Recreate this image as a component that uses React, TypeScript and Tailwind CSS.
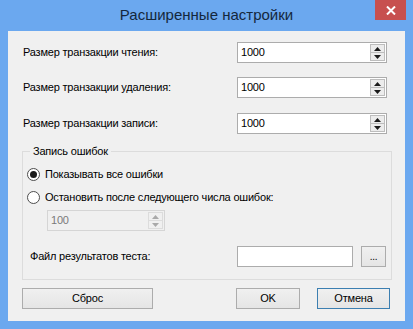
import type { ReactNode } from "react";

const FONT = { fontFamily: '"Liberation Sans", Arial, sans-serif' };

function Arrow({ up, disabled }: { up?: boolean; disabled?: boolean }) {
  return (
    <svg width="7" height="4" viewBox="0 0 7 4" className="block">
      <path
        d={up ? "M0 4 L3.5 0 L7 4 Z" : "M0 0 L7 0 L3.5 4 Z"}
        fill={disabled ? "#a9a9a9" : "#1a1a1a"}
      />
    </svg>
  );
}

function SpinBox({
  value,
  disabled,
  className = "",
}: {
  value: string;
  disabled?: boolean;
  className?: string;
}) {
  return (
    <div
      className={`flex h-[21px] items-center border pr-[1px] ${
        disabled
          ? "border-[#d5d5d5] bg-[#f0f0f0] text-[#7a7a7a]"
          : "border-[#acacac] bg-white text-black"
      } ${className}`}
    >
      <span className="flex-1 pl-[3px] leading-none">{value}</span>
      <div className="flex h-[17px] w-[15px] flex-col">
        <div
          className={`flex flex-1 items-center justify-center border ${
            disabled ? "border-[#dcdcdc] bg-[#f0f0f0]" : "border-[#bdbdbd] bg-[#ececec]"
          }`}
        >
          <Arrow up disabled={disabled} />
        </div>
        <div
          className={`-mt-px flex flex-1 items-center justify-center border ${
            disabled ? "border-[#dcdcdc] bg-[#f0f0f0]" : "border-[#bdbdbd] bg-[#ececec]"
          }`}
        >
          <Arrow disabled={disabled} />
        </div>
      </div>
    </div>
  );
}

function Button({
  children,
  className = "",
  isDefault,
}: {
  children: ReactNode;
  className?: string;
  isDefault?: boolean;
}) {
  return (
    <button
      className={`flex h-[21px] items-center justify-center border bg-gradient-to-b from-[#f0f0f0] to-[#e5e5e5] text-black ${
        isDefault ? "border-[#3c7fb1]" : "border-[#acacac]"
      } ${className}`}
    >
      {children}
    </button>
  );
}

function Radio({ checked, label }: { checked?: boolean; label: string }) {
  return (
    <div className="flex h-[16px] items-center">
      <span className="flex h-[13px] w-[13px] items-center justify-center rounded-full border border-[#4d4d4d] bg-white">
        {checked && <span className="h-[7px] w-[7px] rounded-full bg-[#1a1a1a]" />}
      </span>
      <span className="ml-[5px]">{label}</span>
    </div>
  );
}

const rows = [
  { label: "Размер транзакции чтения:", mt: "mt-[11px]" },
  { label: "Размер транзакции удаления:", mt: "mt-[14px]" },
  { label: "Размер транзакции записи:", mt: "mt-[15px]" },
];

export default function App() {
  return (
    <div
      className="flex h-[329px] w-[413px] flex-col bg-[#6ba8ef] text-[11px] tracking-[-0.2px] text-black"
      style={FONT}
    >
      <div className="relative flex h-[31px] shrink-0 items-center justify-center tracking-normal">
        <span className="text-[15px] text-[#14273c]">Расширенные настройки</span>
        <div className="absolute right-[7px] top-0 flex h-[20px] w-[31px] items-center justify-center bg-[#c7504f]">
          <svg width="10" height="9" viewBox="0 0 10 9">
            <path d="M1 0.5 L9 8.5 M9 0.5 L1 8.5" stroke="#fff" strokeWidth="2" />
          </svg>
        </div>
      </div>

      <div className="mx-[8px] mb-[8px] flex flex-1 flex-col bg-[#f0f0f0] px-[14px]">
        {rows.map((r) => (
          <div key={r.label} className={`flex items-center justify-between ${r.mt}`}>
            <span className="pl-px">{r.label}</span>
            <SpinBox value="1000" className="mr-[4px] w-[150px]" />
          </div>
        ))}

        <fieldset className="mt-[10px] h-[136px] w-[370px] border border-[#dcdcdc] px-[4px]">
          <legend className="ml-[3px] px-[3px] leading-[14px]">Запись ошибок</legend>
          <div className="mt-[8px] pl-0">
            <Radio checked label="Показывать все ошибки" />
            <div className="mt-[7px]">
              <Radio label="Остановить после следующего числа ошибок:" />
            </div>
            <SpinBox value="100" disabled className="ml-[20px] mt-[5px] w-[118px]" />
            <div className="mt-[15px] flex items-center pr-[1px]">
              <span className="ml-[3px] flex-1">Файл результатов теста:</span>
              <div className="h-[21px] w-[116px] border border-[#acacac] bg-white" />
              <Button className="ml-[8px] w-[25px] text-[10px]">...</Button>
            </div>
          </div>
        </fieldset>

        <div className="mt-[8px] flex items-center">
          <Button className="w-[131px]">Сброс</Button>
          <div className="flex-1" />
          <Button className="w-[64px]">OK</Button>
          <Button isDefault className="ml-[17px] w-[73px]">
            Отмена
          </Button>
          <div className="w-[1px]" />
        </div>
      </div>
    </div>
  );
}
